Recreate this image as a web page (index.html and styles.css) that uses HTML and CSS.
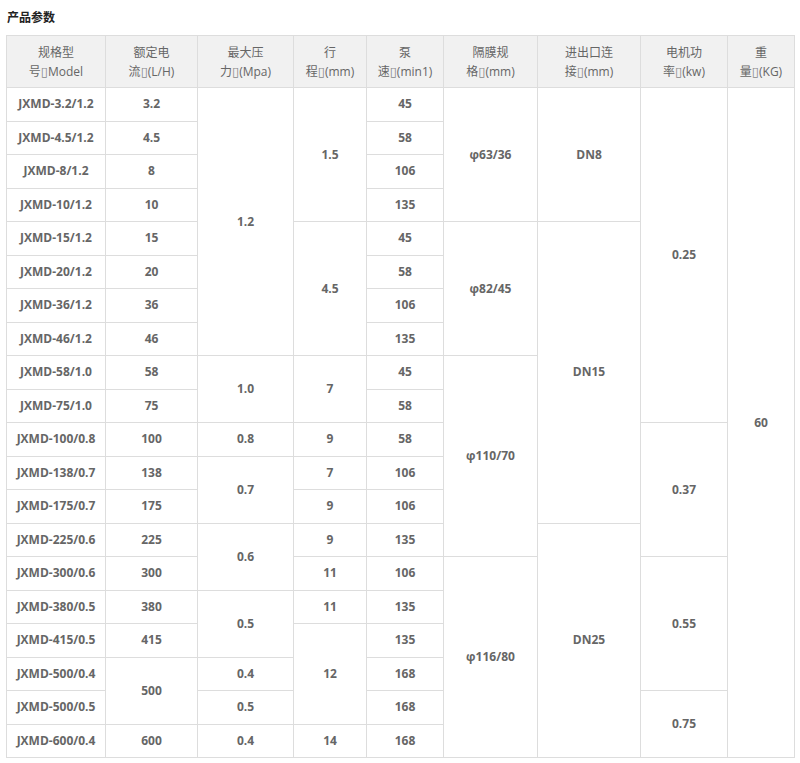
FILE: index.html
```html
<!DOCTYPE html>
<html lang="zh-CN">
<head>
<meta charset="utf-8">
<title>产品参数</title>
<link rel="stylesheet" href="styles.css">
</head>
<body>
<div class="title">产品参数</div>
<table class="spec">
  <colgroup>
    <col class="c1"><col class="c2"><col class="c3"><col class="c4"><col class="c5"><col class="c6"><col class="c7"><col class="c8"><col class="c9">
  </colgroup>
  <thead>
    <tr>
      <th>规格型<br>号<span class="tofu">▯</span>Model</th>
      <th>额定电<br>流<span class="tofu">▯</span>(L/H)</th>
      <th>最大压<br>力<span class="tofu">▯</span>(Mpa)</th>
      <th>行<br>程<span class="tofu">▯</span>(mm)</th>
      <th>泵<br>速<span class="tofu">▯</span>(min1)</th>
      <th>隔膜规<br>格<span class="tofu">▯</span>(mm)</th>
      <th>进出口连<br>接<span class="tofu">▯</span>(mm)</th>
      <th>电机功<br>率<span class="tofu">▯</span>(kw)</th>
      <th>重<br>量<span class="tofu">▯</span>(KG)</th>
    </tr>
  </thead>
  <tbody>
    <tr><td>JXMD-3.2/1.2</td><td>3.2</td><td rowspan="8">1.2</td><td rowspan="4">1.5</td><td>45</td><td rowspan="4">φ63/36</td><td rowspan="4">DN8</td><td rowspan="10">0.25</td><td rowspan="20">60</td></tr>
    <tr><td>JXMD-4.5/1.2</td><td>4.5</td><td>58</td></tr>
    <tr><td>JXMD-8/1.2</td><td>8</td><td>106</td></tr>
    <tr><td>JXMD-10/1.2</td><td>10</td><td>135</td></tr>
    <tr><td>JXMD-15/1.2</td><td>15</td><td rowspan="4">4.5</td><td>45</td><td rowspan="4">φ82/45</td><td rowspan="9">DN15</td></tr>
    <tr><td>JXMD-20/1.2</td><td>20</td><td>58</td></tr>
    <tr><td>JXMD-36/1.2</td><td>36</td><td>106</td></tr>
    <tr><td>JXMD-46/1.2</td><td>46</td><td>135</td></tr>
    <tr><td>JXMD-58/1.0</td><td>58</td><td rowspan="2">1.0</td><td rowspan="2">7</td><td>45</td><td rowspan="6">φ110/70</td></tr>
    <tr><td>JXMD-75/1.0</td><td>75</td><td>58</td></tr>
    <tr><td>JXMD-100/0.8</td><td>100</td><td>0.8</td><td>9</td><td>58</td><td rowspan="4">0.37</td></tr>
    <tr><td>JXMD-138/0.7</td><td>138</td><td rowspan="2">0.7</td><td>7</td><td>106</td></tr>
    <tr><td>JXMD-175/0.7</td><td>175</td><td>9</td><td>106</td></tr>
    <tr><td>JXMD-225/0.6</td><td>225</td><td rowspan="2">0.6</td><td>9</td><td>135</td><td rowspan="7">DN25</td></tr>
    <tr><td>JXMD-300/0.6</td><td>300</td><td>11</td><td>106</td><td rowspan="6">φ116/80</td><td rowspan="4">0.55</td></tr>
    <tr><td>JXMD-380/0.5</td><td>380</td><td rowspan="2">0.5</td><td>11</td><td>135</td></tr>
    <tr><td>JXMD-415/0.5</td><td>415</td><td rowspan="3">12</td><td>135</td></tr>
    <tr><td>JXMD-500/0.4</td><td rowspan="2">500</td><td>0.4</td><td>168</td></tr>
    <tr><td>JXMD-500/0.5</td><td>0.5</td><td>168</td><td rowspan="2">0.75</td></tr>
    <tr><td>JXMD-600/0.4</td><td>600</td><td>0.4</td><td>14</td><td>168</td></tr>
  </tbody>
</table>
</body>
</html>
```

FILE: styles.css
```css
html, body {
  margin: 0;
  padding: 0;
  background: #ffffff;
}
body {
  padding: 0 6px;
  font-family: "Open Sans", "Noto Sans CJK SC", sans-serif;
  color: #666666;
}
.title {
  padding-top: 7px;
  margin-left: 1px;
  height: 20px;
  line-height: 20px;
  margin-bottom: 8px;
  font-family: "Noto Sans CJK SC", sans-serif;
  font-size: 12px;
  font-weight: bold;
  color: #222222;
}
.spec {
  border-collapse: collapse;
  table-layout: fixed;
  width: 789px;
}
.c1 { width: 99px; }
.c2 { width: 92px; }
.c3 { width: 96px; }
.c4 { width: 73px; }
.c5 { width: 77px; }
.c6 { width: 94px; }
.c7 { width: 103px; }
.c8 { width: 87px; }
.c9 { width: 67px; }
.spec th, .spec td {
  border: 1px solid #dddddd;
  text-align: center;
  vertical-align: middle;
  padding: 0;
}
.spec th {
  background: #f1f1f1;
  height: 51px;
  font-family: "Open Sans", "Noto Sans CJK SC", sans-serif;
  font-size: 12px;
  font-weight: normal;
  line-height: 19px;
  color: #666666;
}
.spec td {
  height: 32.5px;
  font-size: 12px;
  font-weight: bold;
  line-height: 16px;
  color: #666666;
}
.tofu {
  font-family: "DejaVu Sans", sans-serif;
  font-size: 13px;
  color: #888888;
}
```
